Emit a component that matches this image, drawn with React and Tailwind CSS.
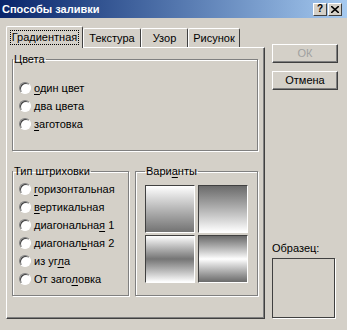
import React from "react";

const Radio = ({ children }) => (
  <div className="flex h-[18px] items-center gap-[3px] pl-[6px]">
    <span className="inline-block h-[12px] w-[12px] rounded-full border border-t-[#808080] border-l-[#808080] border-r-white border-b-white bg-white shadow-[inset_1px_1px_0_#404040]" />
    <span className="leading-none">{children}</span>
  </div>
);

const U = ({ children }) => <span className="underline underline-offset-[2px]">{children}</span>;

const Group = ({ title, className, children }) => (
  <fieldset
    className={
      "border border-[#808080] shadow-[1px_1px_0_#fff,inset_1px_1px_0_#fff] " + className
    }
  >
    <legend className="px-[1px] leading-[13px]">{title}</legend>
    {children}
  </fieldset>
);

const Swatch = ({ grad }) => (
  <div className={"h-[48px] w-[50px] border border-t-[#404040] border-l-[#404040] border-r-white border-b-white " + grad} />
);

const Button = ({ children, disabled }) => (
  <button
    className={
      "h-[19px] w-[66px] border border-t-white border-l-white border-r-[#404040] border-b-[#404040] bg-[#d4d0c8] shadow-[inset_-1px_-1px_0_#808080] leading-none " +
      (disabled ? "text-[#a0a0a0]" : "text-black")
    }
  >
    {children}
  </button>
);

const App = () => {
  return (
    <div className="h-[330px] w-[347px] overflow-hidden bg-[#d4d0c8] font-['Liberation_Sans',sans-serif] text-[11px] text-black">
      <div className="flex h-[18px] items-center justify-between bg-linear-to-r from-[#0a246a] to-[#a6caf0] pl-[2px] pr-[5px]">
        <span className="font-bold text-white">Способы заливки</span>
        <div className="flex gap-[1px]">
          <div className="flex h-[13px] w-[14px] items-center justify-center border border-t-white border-l-white border-r-[#404040] border-b-[#404040] bg-[#d4d0c8] text-[10px] font-bold leading-none">
            ?
          </div>
          <div className="flex h-[13px] w-[14px] items-center justify-center border border-t-white border-l-white border-r-[#404040] border-b-[#404040] bg-[#d4d0c8]">
            <svg width="8" height="7" viewBox="0 0 8 7">
              <path d="M0 0 L8 7 M8 0 L0 7" stroke="#000" strokeWidth="1.6" />
            </svg>
          </div>
        </div>
      </div>

      <div className="flex pl-[6px] pt-[8px]">
        <div className="flex w-[259px] flex-col">
          <div className="flex h-[21px] items-end">
            <div className="relative z-10 mb-[-1px] flex h-[22px] w-[77px] items-center justify-center rounded-t-[2px] border border-b-0 border-t-white border-l-white border-r-[#404040] bg-[#d4d0c8]">
              <span className="border border-dotted border-black px-[1px] leading-[13px]">Градиентная</span>
            </div>
            <div className="flex h-[19px] w-[58px] items-center justify-center rounded-t-[2px] border border-b-0 border-t-white border-l-white border-r-[#404040]">
              Текстура
            </div>
            <div className="flex h-[19px] w-[47px] items-center justify-center rounded-t-[2px] border border-b-0 border-t-white border-l-white border-r-[#404040]">
              Узор
            </div>
            <div className="flex h-[19px] w-[52px] items-center justify-center rounded-t-[2px] border border-b-0 border-t-white border-l-white border-r-[#404040]">
              Рисунок
            </div>
          </div>

          <div className="h-[272px] border border-t-white border-l-white border-r-[#404040] border-b-[#404040] px-[5px] pt-[5px] shadow-[inset_-1px_-1px_0_#808080]">
            <Group title="Цвета" className="h-[98px] w-[246px] pt-[13px]">
              <Radio><U>о</U>дин цвет</Radio>
              <Radio><U>д</U>ва цвета</Radio>
              <Radio><U>з</U>аготовка</Radio>
            </Group>

            <div className="mt-[14px] flex gap-[6px]">
              <Group title="Тип штриховки" className="h-[131px] w-[117px] pt-[2px]">
                <Radio><U>г</U>оризонтальная</Radio>
                <Radio><U>в</U>ертикальная</Radio>
                <Radio>диагональна<U>я</U> 1</Radio>
                <Radio>диагонал<U>ь</U>ная 2</Radio>
                <Radio>из уг<U>л</U>а</Radio>
                <Radio>От заго<U>л</U>овка</Radio>
              </Group>

              <Group title={<>Вари<U>а</U>нты</>} className="h-[131px] w-[123px] pl-[9px] pt-[7px]">
                <div className="grid w-[103px] grid-cols-2 gap-x-[3px] gap-y-[2px]">
                  <Swatch grad="bg-linear-to-b from-white to-[#737373]" />
                  <Swatch grad="bg-linear-to-b from-[#6b6b6b] to-white" />
                  <Swatch grad="bg-linear-to-b from-white via-[#757575] to-white" />
                  <Swatch grad="bg-linear-to-b from-[#6b6b6b] via-white to-[#6b6b6b]" />
                </div>
              </Group>
            </div>
          </div>
        </div>

        <div className="ml-[7px] flex h-[293px] flex-col justify-between pb-[1px]">
          <div className="flex flex-col gap-[8px] pt-[18px]">
            <Button disabled>ОК</Button>
            <Button>Отмена</Button>
          </div>
          <div className="flex flex-col">
            <span className="mb-[3px] leading-[13px]">Образец:</span>
            <div className="h-[60px] w-[63px] border border-[#404040] shadow-[1px_1px_0_#fff]" />
          </div>
        </div>
      </div>
    </div>
  );
};

export default App;
